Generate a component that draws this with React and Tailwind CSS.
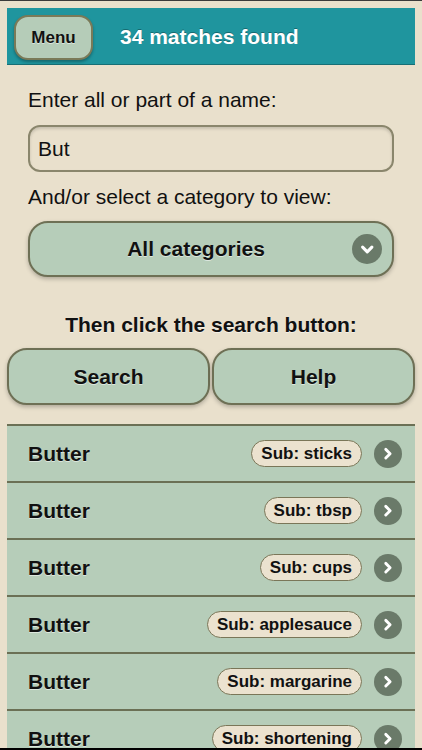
const rows = ['sticks', 'tbsp', 'cups', 'applesauce', 'margarine', 'shortening']

const emboss = '[text-shadow:0_1px_0_rgba(255,255,255,0.55)]'

function Chevron({ down, size = 28 }) {
  return (
    <div
      className="flex shrink-0 items-center justify-center rounded-full bg-[#6a7a69]"
      style={{ width: size, height: size }}
    >
      <svg width={size * 0.55} height={size * 0.55} viewBox="0 0 16 16">
        <path
          d={down ? 'M3.5 6 L8 10.5 L12.5 6' : 'M6 3.5 L10.5 8 L6 12.5'}
          fill="none"
          stroke="white"
          strokeWidth="3"
          strokeLinecap="round"
          strokeLinejoin="round"
        />
      </svg>
    </div>
  )
}

export default function App() {
  return (
    <div
      className="w-[422px] h-[750px] overflow-hidden bg-[#e9e0cc] border-t border-b-2 border-t-[#3a3a3a] border-b-black text-[#111]"
      style={{ fontFamily: '"Liberation Sans", Arial, sans-serif' }}
    >
      {/* Header */}
      <div className="mx-[7px] mt-[7px] h-[57px] bg-[#1f959e] border-b border-[#176f75] flex items-center pt-[2px]">
        <div className={`ml-[7px] w-[79px] h-[45px] rounded-[14px] bg-[#b5ccb8] border-2 border-[#7a7a58] shadow-[0_2px_3px_rgba(0,0,0,0.3)] flex items-center justify-center pt-[2px] font-bold text-[17px] ${emboss}`}>
          Menu
        </div>
        <div className="ml-[27px] text-white font-bold text-[21px] [text-shadow:0_-1px_0_rgba(0,0,0,0.3)]">
          34 matches found
        </div>
      </div>

      {/* Form */}
      <div className="px-[28px]">
        <p className="mt-[23px] text-[21px] leading-[24px]">Enter all or part of a name:</p>
        <div className="mt-[13px] h-[47px] rounded-[12px] border-2 border-[#8a866c] bg-[#e9e0cc] shadow-[inset_0_2px_3px_rgba(0,0,0,0.15)] flex items-center px-[8px] text-[21px]">
          But
        </div>
        <p className="mt-[13px] text-[21px] leading-[24px]">And/or select a category to view:</p>
        <div className="mt-[12px] h-[56px] rounded-[20px] border-2 border-[#6e7055] bg-[#b6cdb9] shadow-[0_2px_4px_rgba(0,0,0,0.25)] flex items-center pl-[10px] pr-[10px]">
          <span className={`flex-1 text-center font-bold text-[21px] ${emboss}`}>All categories</span>
          <Chevron down size={30} />
        </div>
      </div>

      <p className={`mt-[36px] text-center font-bold text-[21px] leading-[24px] ${emboss}`}>
        Then click the search button:
      </p>

      <div className="mt-[11px] px-[7px] flex gap-[2px]">
        {['Search', 'Help'].map(b => (
          <div
            key={b}
            className={`flex-1 h-[57px] rounded-[20px] border-2 border-[#6e7055] bg-[#b6cdb9] shadow-[0_2px_4px_rgba(0,0,0,0.25)] flex items-center justify-center font-bold text-[21px] ${emboss}`}
          >
            {b}
          </div>
        ))}
      </div>

      {/* Results */}
      <div className="mt-[19px] mx-[7px] bg-[#b6cdb9]">
        {rows.map(r => (
          <div key={r} className="h-[57px] border-t-2 border-[#6b7055] flex items-center pl-[21px] pr-[13px]">
            <span className={`flex-1 font-bold text-[21px] ${emboss}`}>Butter</span>
            <span className="h-[27px] px-[9px] rounded-full border border-[#7a7658] bg-[#ebe2cf] flex items-center font-bold text-[17px]">
              Sub: {r}
            </span>
            <div className="ml-[12px]">
              <Chevron size={28} />
            </div>
          </div>
        ))}
      </div>
    </div>
  )
}
